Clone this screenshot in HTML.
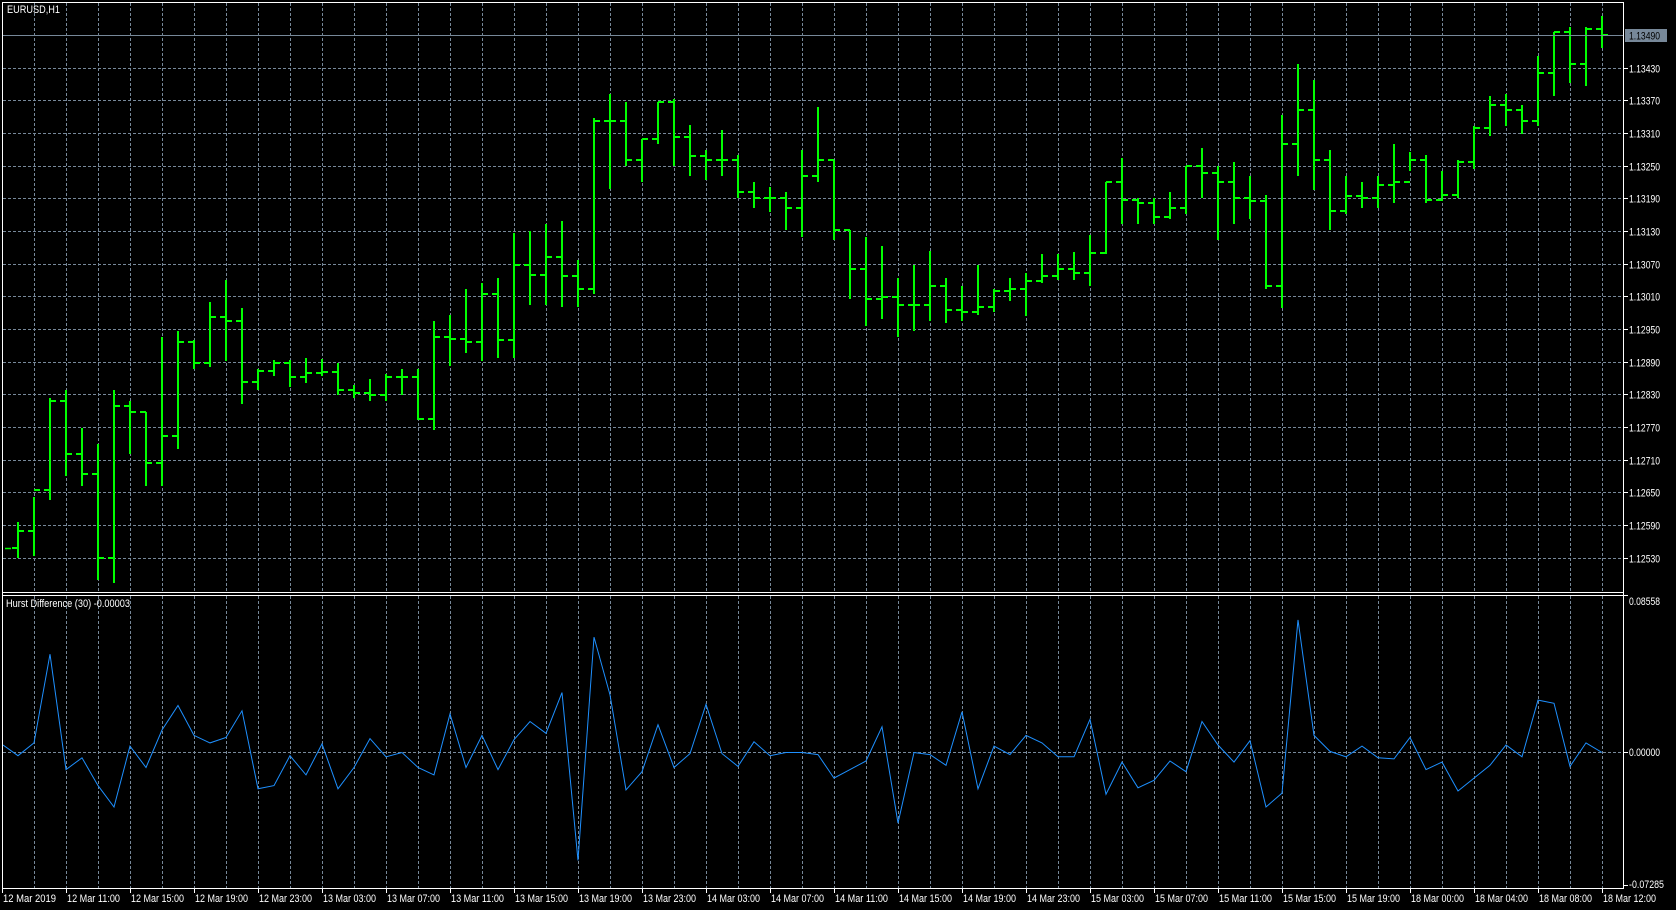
<!DOCTYPE html>
<html><head><meta charset="utf-8"><style>
html,body{margin:0;padding:0;background:#000;width:1676px;height:910px;overflow:hidden}
svg{display:block}
text{font-family:"Liberation Sans",sans-serif;font-size:11px;fill:#fff}
</style></head><body>
<svg id="s" width="1676" height="910" xmlns="http://www.w3.org/2000/svg">
<rect width="1676" height="910" fill="#000"/>
<g id="grid" stroke="#778899" stroke-width="1" stroke-dasharray="3,2"></g>
<g id="bars" stroke="#00ff00" stroke-width="2" fill="none"></g>
<polyline id="ind" fill="none" stroke="#1e90ff" stroke-width="1"/>
<g id="frame" stroke="#fff" stroke-width="1" fill="none">
<line x1="2.5" y1="2.5" x2="1623.5" y2="2.5"/>
<line x1="2.5" y1="2" x2="2.5" y2="889"/>
<line x1="1623.5" y1="2" x2="1623.5" y2="889"/>
<line x1="2" y1="592.5" x2="1624" y2="592.5"/>
<line x1="2" y1="595.5" x2="1624" y2="595.5"/>
<line x1="2" y1="888.5" x2="1624" y2="888.5"/>
<line x1="1623" y1="595.5" x2="1628" y2="595.5"/>
<line x1="1623" y1="885.5" x2="1628" y2="885.5"/>
</g>
<line x1="3" y1="35.5" x2="1623" y2="35.5" stroke="#778899" stroke-width="1"/>
<rect x="1625" y="29" width="42" height="13" fill="#778899"/>
<text x="1629" y="39.5" style="fill:#000" textLength="31" lengthAdjust="spacingAndGlyphs">1.13490</text>
<text x="7" y="13" textLength="53" lengthAdjust="spacingAndGlyphs">EURUSD,H1</text>
<text x="6" y="607" textLength="124" lengthAdjust="spacingAndGlyphs">Hurst Difference (30) -0.00003</text>
<text x="1629" y="605" textLength="31" lengthAdjust="spacingAndGlyphs">0.08558</text>
<text x="1629" y="888" textLength="35" lengthAdjust="spacingAndGlyphs">-0.07285</text>
<g id="labels"></g>
</svg>
<script>
var NS="http://www.w3.org/2000/svg";
function el(p,t,a){var e=document.createElementNS(NS,t);for(var k in a)e.setAttribute(k,a[k]);p.appendChild(e);return e;}
var S=1676/1568;
var grid=document.getElementById('grid'),lab=document.getElementById('labels'),s=document.getElementById('s');
for(var x=34;x<=1602;x+=32){el(grid,'line',{x1:x+.5,y1:3,x2:x+.5,y2:592});el(grid,'line',{x1:x+.5,y1:596,x2:x+.5,y2:888});}
for(var k=1;k<=16;k++){var y=Math.round(35+k*6*5.445)+.5;el(grid,'line',{x1:3,y1:y,x2:1623,y2:y});
 var p=(1.13490-k*0.0006).toFixed(5);el(s,'line',{x1:1623,y1:y,x2:1628,y2:y,stroke:'#fff'});var t=el(lab,'text',{x:1629,y:y+4,textLength:31,lengthAdjust:'spacingAndGlyphs'});t.textContent=p;}
el(grid,'line',{x1:3,y1:752.5,x2:1623,y2:752.5});
el(s,'line',{x1:1623,y1:752.5,x2:1628,y2:752.5,stroke:'#fff'});
var t0=el(lab,'text',{x:1629,y:756,textLength:31,lengthAdjust:'spacingAndGlyphs'});t0.textContent="0.00000";
var D=[[488,522,513,497],[465,520,497,458],[372,468,458,375],[365,445,375,425],[400,455,425,443],[415,543,443,522],[365,545,522,380],[375,425,380,385],[385,455,385,433],[315,455,433,408],[310,420,408,320],[318,345,320,340],[283,343,340,297],[262,338,297,300],[288,378,300,357],[345,365,357,347],[337,352,347,340],[337,362,340,353],[335,358,353,349],[336,352,349,348],[340,370,348,365],[360,372,365,368],[355,375,368,370],[350,375,370,353],[345,370,353,353],[345,393,353,392],[300,402,392,315],[295,342,315,317],[270,330,317,320],[265,338,320,275],[260,335,275,318],[218,335,318,248],[216,285,248,257],[210,285,257,240],[207,287,240,258],[243,287,258,270],[110,275,270,113],[88,177,113,113],[95,155,113,150],[130,170,150,130],[95,135,130,95],[93,155,95,128],[117,165,128,146],[140,168,146,150],[122,165,150,150],[145,185,150,180],[170,195,180,185],[175,198,185,185],[180,215,185,195],[140,222,195,165],[100,170,165,150],[150,225,150,215],[215,280,215,252],[222,305,252,280],[230,298,280,278],[260,315,278,285],[248,310,285,285],[235,300,285,268],[260,302,268,290],[268,300,290,292],[248,295,292,287],[270,292,287,272],[260,282,272,270],[255,296,270,263],[238,265,263,258],[238,262,258,252],[236,262,252,255],[220,268,255,237],[170,238,237,170],[148,210,170,187],[185,210,187,190],[185,210,190,203],[180,205,203,195],[155,200,195,155],[138,185,155,162],[155,225,162,170],[152,210,170,185],[165,205,185,188],[182,270,188,268],[108,288,268,135],[60,165,135,103],[75,178,103,150],[140,215,150,197],[165,200,197,183],[170,195,183,185],[165,195,185,173],[135,190,173,170],[142,160,170,150],[145,190,150,187],[160,188,187,182],[150,185,182,152],[118,158,152,120],[90,127,120,98],[88,118,98,103],[98,125,103,113],[52,118,113,68],[30,90,68,30],[25,78,30,60],[25,80,60,27],[15,45,27,33]];
var bars=document.getElementById('bars');
el(bars,'line',{x1:5,y1:Math.round(513*S)+.5,x2:11,y2:Math.round(513*S)+.5,'stroke-width':1.5});
D.forEach(function(d,i){var x=18+i*16;var h=Math.round(d[0]*S),l=Math.round(d[1]*S),o=Math.round(d[2]*S),c=Math.round(d[3]*S);
 if(l>591)l=591;
 el(bars,'line',{x1:x,y1:h,x2:x,y2:l});el(bars,'line',{x1:x-6,y1:o,x2:x,y2:o});el(bars,'line',{x1:x,y1:c,x2:x+6,y2:c});});
var I=[707,695,612,720,709,735,755,698,718,683,660,688,695,690,665,738,735,707,725,696,738,718,691,708,704,718,725,668,718,688,720,692,675,686,648,805,596,650,739,722,678,718,705,659,705,717,694,707,704,704,706,728,720,712,680,770,704,706,716,666,738,698,706,688,695,708,708,673,743,713,737,730,712,722,675,697,713,693,755,742,580,688,703,708,698,709,710,690,720,713,740,728,716,697,708,655,658,717,695,704];
var pts=["3,"+(697*S).toFixed(1)];I.forEach(function(v,i){pts.push((18+i*16)+","+(v*S).toFixed(1));});
document.getElementById('ind').setAttribute('points',pts.join(' '));
var L=["12 Mar 2019","12 Mar 11:00","12 Mar 15:00","12 Mar 19:00","12 Mar 23:00","13 Mar 03:00","13 Mar 07:00","13 Mar 11:00","13 Mar 15:00","13 Mar 19:00","13 Mar 23:00","14 Mar 03:00","14 Mar 07:00","14 Mar 11:00","14 Mar 15:00","14 Mar 19:00","14 Mar 23:00","15 Mar 03:00","15 Mar 07:00","15 Mar 11:00","15 Mar 15:00","15 Mar 19:00","18 Mar 00:00","18 Mar 04:00","18 Mar 08:00","18 Mar 12:00"];
L.forEach(function(t,i){var x=2+i*64;el(s,'line',{x1:x+.5,y1:888,x2:x+.5,y2:893,stroke:'#fff'});var e=el(lab,'text',{x:x+1,y:902,textLength:53,lengthAdjust:'spacingAndGlyphs'});e.textContent=t;});
</script>
</body></html>
